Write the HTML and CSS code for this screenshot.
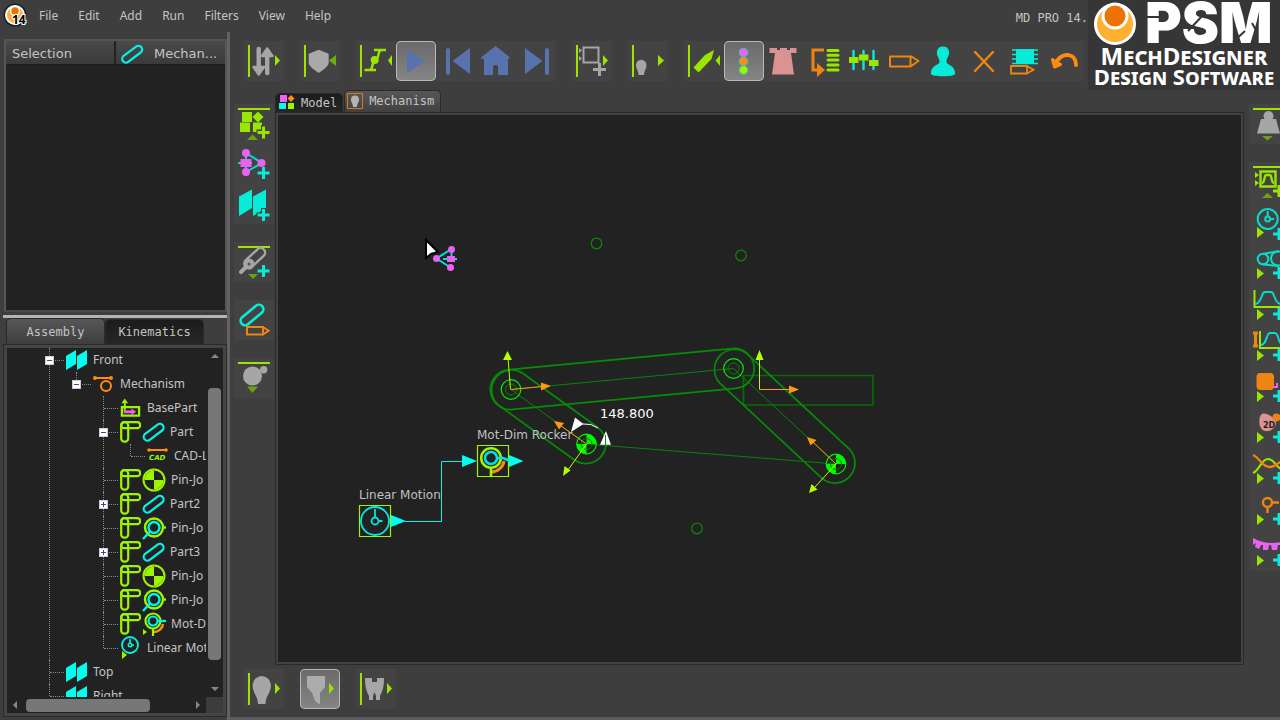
FILE: index.html
```html
<!DOCTYPE html>
<html lang="en">
<head>
<meta charset="utf-8">
<title>MechDesigner</title>
<link rel="stylesheet" href="styles.css">
</head>
<body>
<svg class="sprite" aria-hidden="true">
  <symbol id="planes" viewBox="0 0 21 20"><path d="M0 6 10 0v14L0 20zM11 6 21 0v14l-10 6z" fill="#00ffee"/></symbol>
  <symbol id="mech" viewBox="0 0 21 20"><path d="M2 4h16" stroke="#ff8c10" stroke-width="2"/><circle cx="2" cy="4" r="2" fill="#ff8c10"/><circle cx="18" cy="4" r="2" fill="#ff8c10"/><circle cx="13" cy="12" r="5" fill="none" stroke="#ff8c10" stroke-width="2"/></symbol>
  <symbol id="base" viewBox="0 0 22 20"><path d="M2 18V9h18v9z" fill="none" stroke="#9df500" stroke-width="2.400"/><path d="M5 14V5" stroke="#9df500" stroke-width="2"/><path d="M1.500 5 5 0l3.500 5z" fill="#9df500"/><path d="M4 14h9" stroke="#ee60f4" stroke-width="3"/><path d="m12 10.500 5 3.500-5 3.500z" fill="#ee60f4"/></symbol>
  <symbol id="frame" viewBox="0 0 21 22"><g fill="none" stroke="#9df500" stroke-width="2.200"><rect x="1.200" y="1.200" width="7" height="19.500" rx="3.300"/><rect x="1.200" y="1.200" width="19" height="6" rx="3"/></g></symbol>
  <symbol id="link" viewBox="0 0 23 20"><rect x="0" y="6.500" width="23" height="7.500" rx="3.700" fill="none" stroke="#00f5e4" stroke-width="2.200" transform="rotate(-37 11.500 10)"/></symbol>
  <symbol id="cad" viewBox="0 0 21 20"><path d="M2 4h17" stroke="#ff8c10" stroke-width="2"/><circle cx="2" cy="4" r="1.800" fill="#ff8c10"/><circle cx="19" cy="4" r="1.800" fill="#ff8c10"/><text x="2" y="14" class="cad-text">CAD</text></symbol>
  <symbol id="pin" viewBox="0 0 24 24"><circle cx="12" cy="12" r="10.500" fill="#222" stroke="#9df500" stroke-width="2"/><path d="M12 12V2.500A9.500 9.500 0 0 0 2.500 12zM12 12v9.500a9.500 9.500 0 0 0 9.500-9.500z" fill="#9df500"/></symbol>
  <symbol id="slide" viewBox="0 0 24 24"><circle cx="12" cy="11.500" r="9" fill="none" stroke="#9df500" stroke-width="2.400"/><path d="M21 11.500h3" stroke="#9df500" stroke-width="2.400"/><circle cx="12" cy="11.500" r="5.500" fill="none" stroke="#00f5e4" stroke-width="2.400"/><path d="m8 15.500-7 7.500" stroke="#00f5e4" stroke-width="2.400"/></symbol>
  <symbol id="motdim" viewBox="0 0 24 24"><path d="M21 12a9 9 0 0 1-9 8" fill="none" stroke="#ff8c10" stroke-width="2.400"/><circle cx="11" cy="9" r="7.500" fill="none" stroke="#9df500" stroke-width="2.200"/><path d="M11 16v8" stroke="#9df500" stroke-width="2.200"/><circle cx="11" cy="9" r="4.500" fill="none" stroke="#00f5e4" stroke-width="2.200"/><path d="M15 9h9" stroke="#00f5e4" stroke-width="2.400"/><path d="m1 17 4 3-4 3z" fill="#9df500"/></symbol>
  <symbol id="clock" viewBox="0 0 21 24"><circle cx="10" cy="9" r="8" fill="none" stroke="#00f5e4" stroke-width="1.800"/><path d="M10 9V3M10 9h4" stroke="#00f5e4" stroke-width="1.600"/><circle cx="10" cy="9" r="1.800" fill="#222" stroke="#00f5e4" stroke-width="1.400"/><path d="m2 15 5 4-5 4z" fill="#9df500"/></symbol>
</svg>

<div class="app">
  <header class="menubar">
    <svg class="app-icon" width="26" height="26" viewBox="0 0 26 26" aria-hidden="true"><circle cx="12" cy="12" r="10.500" fill="#ffb030" stroke="#1c1c38" stroke-width="2"/><circle cx="12" cy="12" r="9" fill="none" stroke="#fff" stroke-width="2"/><circle cx="12" cy="8" r="4.500" fill="#ee7203" stroke="#fff" stroke-width="1.500"/><text x="9" y="21" class="version">14</text></svg>
    <nav class="menus" aria-label="Main menu">
      <button>File</button><button>Edit</button><button>Add</button><button>Run</button><button>Filters</button><button>View</button><button>Help</button>
    </nav>
    <span class="window-title">MD PRO 14.</span>
  </header>

  <div class="body">
    <aside class="dock">
      <section class="selection" aria-label="Selection">
        <div class="selection-head">
          <div class="cell cell-name">Selection</div>
          <div class="cell cell-value"><svg width="24" height="20"><use href="#link"/></svg><span>Mechan...</span></div>
        </div>
      </section>
      <div class="splitter"></div>
      <div class="dock-tabs" role="tablist">
        <button class="dock-tab active" role="tab" aria-selected="true">Assembly</button>
        <button class="dock-tab" role="tab" aria-selected="false">Kinematics</button>
      </div>
      <section class="tree-panel">
        <div class="tree-view">
          <ul class="tree">
            <li><div class="row"><button class="toggle minus" aria-label="Collapse Front"></button><svg width="21" height="20"><use href="#planes"/></svg><span>Front</span></div>
              <ul>
                <li><div class="row"><button class="toggle minus" aria-label="Collapse Mechanism"></button><svg width="21" height="20"><use href="#mech"/></svg><span>Mechanism</span></div>
                  <ul>
                    <li><div class="row"><i class="leaf"></i><svg width="21" height="20"><use href="#base"/></svg><span>BasePart</span></div></li>
                    <li><div class="row"><button class="toggle minus" aria-label="Collapse Part"></button><svg width="21" height="22"><use href="#frame"/></svg><svg class="second" width="23" height="20"><use href="#link"/></svg><span>Part</span></div>
                      <ul><li><div class="row"><i class="leaf"></i><svg width="21" height="20"><use href="#cad"/></svg><span>CAD-L</span></div></li></ul>
                    </li>
                    <li><div class="row"><i class="leaf"></i><svg width="21" height="22"><use href="#frame"/></svg><svg class="second" width="24" height="24"><use href="#pin"/></svg><span>Pin-Jo</span></div></li>
                    <li><div class="row"><button class="toggle more" aria-label="Expand Part2"></button><svg width="21" height="22"><use href="#frame"/></svg><svg class="second" width="23" height="20"><use href="#link"/></svg><span>Part2</span></div></li>
                    <li><div class="row"><i class="leaf"></i><svg width="21" height="22"><use href="#frame"/></svg><svg class="second" width="24" height="24"><use href="#slide"/></svg><span>Pin-Jo</span></div></li>
                    <li><div class="row"><button class="toggle more" aria-label="Expand Part3"></button><svg width="21" height="22"><use href="#frame"/></svg><svg class="second" width="23" height="20"><use href="#link"/></svg><span>Part3</span></div></li>
                    <li><div class="row"><i class="leaf"></i><svg width="21" height="22"><use href="#frame"/></svg><svg class="second" width="24" height="24"><use href="#pin"/></svg><span>Pin-Jo</span></div></li>
                    <li><div class="row"><i class="leaf"></i><svg width="21" height="22"><use href="#frame"/></svg><svg class="second" width="24" height="24"><use href="#slide"/></svg><span>Pin-Jo</span></div></li>
                    <li><div class="row"><i class="leaf"></i><svg width="21" height="22"><use href="#frame"/></svg><svg class="second" width="24" height="24"><use href="#motdim"/></svg><span>Mot-D</span></div></li>
                    <li><div class="row"><i class="leaf"></i><svg width="21" height="24"><use href="#clock"/></svg><span>Linear Mot</span></div></li>
                  </ul>
                </li>
              </ul>
            </li>
            <li><div class="row"><i class="leaf"></i><svg width="21" height="20"><use href="#planes"/></svg><span>Top</span></div></li>
            <li><div class="row"><i class="leaf"></i><svg width="21" height="20"><use href="#planes"/></svg><span>Right</span></div></li>
          </ul>
        </div>
        <div class="vbar"><i class="arrow up"></i><i class="thumb"></i><i class="arrow down"></i></div>
        <div class="hbar"><i class="arrow left"></i><i class="thumb"></i><i class="arrow right"></i></div>
        <div class="corner"></div>
      </section>
    </aside>

    <main class="workspace">
      <div class="toolbar top" role="toolbar" aria-label="Main tools">
        <div class="group">
          <button aria-label="Sort"><svg viewBox="0 0 40 40"><path d="M4 4h2v32H4z" fill="#9ae600"/><g fill="#a6a6a6" stroke="#a6a6a6" stroke-linejoin="round" stroke-linecap="round"><path d="M14.700 8v17M23.200 32V16" stroke-width="4.400"/><path d="M9.500 26H20l-5.300 7.500zM18 15h10.500L23.200 7.500z" stroke-width="2.400"/></g><path d="m31 14 5 5.500-5 5.500z" fill="#9ae600"/></svg></button>
        </div>
        <div class="group">
          <button aria-label="Shield"><svg viewBox="0 0 40 40"><path d="M4 4h2v32H4z" fill="#9ae600"/><path d="m18.700 8.700 10 4V22c0 3-7 8-10 10-3-2-10-7-10-10v-9.300z" fill="#a9a9a9"/><path d="M36 14v11l-7-5.500z" fill="#6fae10"/></svg></button>
        </div>
        <div class="group">
          <button aria-label="Cycle"><svg viewBox="0 0 40 40"><path d="M4 4h2v32H4z" fill="#9ae600"/><path d="M18 9h12M8.500 29H20M25 9c-4 2-1 7-5 10-6 4-2 8-6 10" fill="none" stroke="#9ae600" stroke-width="2.400"/><circle cx="18.700" cy="19" r="4" fill="#9ae600"/><path d="M36 14v11l-4-5.500z" fill="#9ae600"/></svg></button>
          <button class="pressed" aria-label="Play" aria-pressed="true"><svg viewBox="0 0 40 40"><path d="m11 8 18 12-18 12.500z" fill="#5872ae"/></svg></button>
          <button aria-label="To start"><svg viewBox="0 0 40 40" fill="#5872ae"><rect x="10" y="7" width="4" height="27" rx="2"/><path d="M34 7v26L16.500 20z"/></svg></button>
          <button aria-label="Home"><svg viewBox="0 0 40 40" fill="#5872ae"><path d="M19.500 5 33.500 16v2H32v16H22v-9q-2.500-2-5 0v9H8V18H5.500v-2z"/></svg></button>
          <button aria-label="To end"><svg viewBox="0 0 40 40" fill="#5872ae"><path d="m9 7 17.500 13L9 33z"/><rect x="29" y="7" width="4" height="27" rx="2"/></svg></button>
        </div>
        <div class="group">
          <button aria-label="Add element"><svg viewBox="0 0 40 40"><path d="M4 4h2v32H4z" fill="#9ae600"/><path d="M11.500 6.500h15v15h-15z" fill="none" stroke="#a6a6a6" stroke-width="2"/><path d="m7 7 3 2.500L7 12zM7 15l3 2.500L7 20z" fill="#a6a6a6"/><path d="M27.500 22v13M21 28.500h13" stroke="#a6a6a6" stroke-width="3"/><path d="m31 14 5 5.500-5 5.500z" fill="#9ae600"/></svg></button>
        </div>
        <div class="group">
          <button aria-label="Show"><svg viewBox="0 0 40 40"><path d="M4 4h2v32H4z" fill="#9ae600"/><path d="M10.500 34c0-4-2.500-6-2.500-10a5 5 0 0 1 10.500 0c0 4-2.500 6-2.500 10z" fill="#a6a6a6"/><path d="m30 14 6 5.500-6 5.500z" fill="#9ae600"/></svg></button>
        </div>
        <div class="group">
          <button aria-label="Pen"><svg viewBox="0 0 40 40"><path d="M4 4h2v32H4z" fill="#9ae600"/><path d="m30 9-2.500 9L14.500 31.500l-5-5L21 14z" fill="#9ae600"/><path d="M36 14v11l-4.500-5.500z" fill="#9ae600"/></svg></button>
          <button class="pressed" aria-label="Status lights" aria-pressed="true"><svg viewBox="0 0 40 40" stroke="#38c8b0"><circle cx="19.500" cy="11.500" r="4.300" fill="#f060f4"/><circle cx="19.500" cy="20.300" r="4.300" fill="#ff8c10"/><circle cx="19.500" cy="29" r="4.300" fill="#9df500"/></svg></button>
          <button aria-label="Rebuild"><svg viewBox="0 0 40 40"><path d="M5.500 7H13v2h3V7h7v2h3V7h6.500v5H27l3 21.500H8L11 12H5.500z" fill="#db9292"/></svg></button>
          <button aria-label="Reorder"><svg viewBox="0 0 40 40"><path d="M20 9H9v20h5" fill="none" stroke="#ee8512" stroke-width="3"/><path d="m13 22 8 7-8 7z" fill="#ee8512"/><path d="M24 9.500h10M24 14.200h10M24 19h10M24 24h10M24 29h10" stroke="#9ae600" stroke-width="3" stroke-linecap="round"/></svg></button>
          <button aria-label="Settings"><svg viewBox="0 0 40 40"><path d="M9.500 10v18M19.500 10v18M29.500 10v18" stroke="#06ecd8" stroke-width="2.400" stroke-linecap="round"/><path d="M5 16h9.500v6H5zM15 13.500h9.500v6H15zM25 19h9.500v6H25z" fill="#9ae600"/></svg></button>
          <button aria-label="Edit"><svg viewBox="0 0 40 40" fill="none" stroke="#ee8512" stroke-width="2" stroke-linejoin="round"><path d="M6 15.500h20.500v10H6zM26.500 15l8 5-8 5.500"/></svg></button>
          <button aria-label="User"><svg viewBox="0 0 40 40"><path d="M19 5.500c4.500 0 6.500 3.500 6 7.500-.4 3-2.500 4-2.500 8 0 3 9 3 8.500 12-.2 3-24 3-24 0-.5-9 8.500-9 8.500-12 0-4-2.100-5-2.500-8-.5-4 1.500-7.500 6-7.500z" fill="#06ecd8"/></svg></button>
          <button aria-label="Delete"><svg viewBox="0 0 40 40"><path d="m11 11 18 19M29 11 11 30" stroke="#ee8512" stroke-width="2.400" stroke-linecap="round"/></svg></button>
          <button aria-label="Edit memory"><svg viewBox="0 0 40 40"><path d="M12 8h18v15H12z" fill="#06ecd8"/><path d="M8 9h26M8 13.500h26M8 18h26M8 22.500h26" stroke="#06ecd8" stroke-width="1.600"/><path d="M7 25h16v7.500H7zM23 25l6.500 3.700-6.500 3.800" fill="none" stroke="#ee8512" stroke-width="1.800"/></svg></button>
          <button aria-label="Undo"><svg viewBox="0 0 40 40"><path d="M13 20c6-9 19-8 19 4" fill="none" stroke="#ff8a10" stroke-width="4" stroke-linecap="round"/><path d="m8.500 18.500 8 5-6 2.500z" fill="#ff8a10" stroke="#ff8a10" stroke-width="3" stroke-linejoin="round"/></svg></button>
        </div>
      </div>

      <div class="stage">
        <div class="toolbar side left" role="toolbar" aria-label="Model tools">
          <div class="group">
            <button aria-label="Add blocks"><svg viewBox="0 0 40 40" fill="#9ae600"><path d="M4 4h32v2H4zM8 8h10v10H8zM24 7.500l5.500 5.500-5.500 5.500-5.500-5.500zM6 18.500h10V28H6zM19 18.500h9V28h-9z"/><path d="M29.500 21v14M22.500 28h14" stroke="#434343" stroke-width="5"/><path d="M29.500 22.500v12M23.500 28.500h12" stroke="#9ae600" stroke-width="3"/><path d="m18.500 30.500 5.500 5.500H13z" fill="#6fa012"/></svg></button>
            <button aria-label="Add mechanism"><svg viewBox="0 0 40 40"><path d="m12 9 16 10-16 9M4 19h14M12 9v19" fill="none" stroke="#06d8d0" stroke-width="2"/><g fill="#ea62f0"><circle cx="12" cy="9" r="4"/><circle cx="27.500" cy="19" r="4"/><circle cx="12" cy="28" r="4"/><path d="M6.500 15h11v8h-11z"/></g><path d="M29.500 23v12M23.500 29h12" stroke="#06ecd8" stroke-width="3"/></svg></button>
            <button aria-label="Add plane"><svg viewBox="0 0 40 40"><path d="m5 12.500 13-7V24L5 32zM19 12.500l13-7V24l-13 8z" fill="#06ecd8"/><path d="M29.500 24v14M22.500 31h14" stroke="#434343" stroke-width="5"/><path d="M29.500 25v12M23.500 31h12" stroke="#06ecd8" stroke-width="3"/></svg></button>
          </div>
          <div class="group">
            <button aria-label="Add link"><svg viewBox="0 0 40 40"><path d="M4 4h32v2H4z" fill="#9ae600"/><g fill="none" stroke="#a6a6a6"><rect x="8" y="12" width="25" height="9" rx="4.500" stroke-width="2.400" transform="rotate(-43 20 16)"/><path d="m7 30 6-6" stroke-width="4" stroke-linecap="round"/></g><circle cx="15" cy="22" r="5.500" fill="#a6a6a6"/><circle cx="15" cy="22" r="1.500" fill="#555"/><path d="M29.500 23v12M23.500 29h12" stroke="#06ecd8" stroke-width="3"/><path d="M14 32h10l-5 5z" fill="#6fa012"/></svg></button>
          </div>
          <div class="group">
            <button aria-label="Edit part"><svg viewBox="0 0 40 40" fill="none"><rect x="4.500" y="10.500" width="27" height="9" rx="4.500" stroke="#06ecd8" stroke-width="2.600" transform="rotate(-40 18 15)"/><path d="M13 27h16v7.500H13zM29 27l5.500 3.700-5.500 3.800" stroke="#ee8512" stroke-width="2"/></svg></button>
          </div>
          <div class="group">
            <button aria-label="Mass"><svg viewBox="0 0 40 40"><path d="M4 4h32v2H4z" fill="#9ae600"/><circle cx="18.500" cy="18" r="9.500" fill="#a6a6a6"/><circle cx="29.700" cy="11.700" r="3.700" fill="#a6a6a6"/><path d="M13 28.500h11L18.500 35z" fill="#6fa012"/></svg></button>
          </div>
        </div>

        <section class="center">
          <div class="view-tabs" role="tablist">
            <button class="view-tab" role="tab" aria-selected="false"><svg width="16" height="16" viewBox="0 0 16 16"><path d="M1 0h7v7H1z" fill="#f060f4"/><path d="m12 0 3.500 3.500L12 7 8.500 3.500z" fill="#ff8c10"/><path d="M0 8h7v6H0z" fill="#00ffee"/><path d="M9 8h6v6H9z" fill="#9df500"/></svg>Model</button>
            <button class="view-tab active" role="tab" aria-selected="true"><svg width="16" height="16" viewBox="0 0 16 16"><path d="M.500.500h15v15H.500z" fill="none" stroke="#d87a14"/><path d="M6 14c0-4-2-4-2-7.500a4 4 0 0 1 8 0C12 10 10 10 10 14z" fill="#b4b4b4"/></svg>Mechanism</button>
          </div>
          <div class="canvas-frame">
            <svg class="canvas" role="img" aria-label="Four-bar mechanism">
              <g transform="translate(-278 -115)" fill="none">
                <g stroke="#088a08" stroke-width="1.200"><circle cx="596.500" cy="243.500" r="5.300"/><circle cx="741" cy="255.500" r="5.300"/><circle cx="697" cy="528.500" r="5.300"/></g>
                <path d="M743.500 375.500h129.500v29.500H743.500z" stroke="#046c04" stroke-width="1.700"/>
                <g stroke="#068c06" stroke-width="1.700">
                  <path d="M509.100 369.600 731.600 348.600A20 20 0 1 1 735.400 388.400L512.900 409.400A20 20 0 1 1 509.100 369.600z"/>
                  <path d="M522.700 373.300 598.200 427.800A20 20 0 0 1 574.800 460.200L499.300 405.700A20 20 0 0 1 522.700 373.300z"/>
                  <path d="M747.100 353.900 849.600 449.400A20 20 0 0 1 822.400 478.600L719.900 383.100A20 20 0 0 1 747.100 353.900z"/>
                </g>
                <g stroke="#088208"><path d="M511 389.500 733.500 368.500 836 464 586.500 444z"/><circle cx="511" cy="389.500" r="5.500"/><circle cx="733.500" cy="368.500" r="5.500"/></g>
                <g stroke="#00f000" stroke-width="1.200"><circle cx="511" cy="389.500" r="9.800"/><circle cx="733.500" cy="368.500" r="9.800"/><circle cx="586.500" cy="444" r="9.800"/><circle cx="836" cy="464" r="9.800"/></g>
                <g fill="#00fa00"><path d="M586.500 444v-9.800a9.800 9.800 0 0 1 9.800 9.800zM586.500 444v9.800a9.800 9.800 0 0 1-9.800-9.800zM836 464v-9.800a9.800 9.800 0 0 1 9.800 9.800zM836 464v9.800a9.800 9.800 0 0 1-9.800-9.800z"/></g>
                <g stroke="#087808"><circle cx="586.500" cy="444" r="5.500"/><circle cx="836" cy="464" r="5.500"/></g>
                <g stroke="#b4ff00" fill="#b4ff00"><path d="M510.500 389.500 508 358M759.500 389.500V358M586.500 444 568 470M836 464 815 487"/><path stroke="none" d="m507.500 351 4.500 9h-9zM759.500 350l4 10h-8zM563 476l1.500-10 6 4.500zM809 493l2.500-9 6 5.500z"/></g>
                <g stroke="#ff9a10" fill="#ff9a10"><path d="m511 389.500 31-3M759.500 389.500H790M586.500 444 561 426M836 464 813 442"/><path stroke="none" d="m551 386-10 4.500v-8zM799 389.500l-10 4v-8zM554 421l10 2-5 6.500zM807 437l9.500 3-6 5.500z"/></g>
                <path d="m575 417.500 8.500 6.500-12.500 8zM600 444.700h11L606 431z" fill="#fff"/><path d="M583 424q8-1 15 4" stroke="#fff"/><path d="M605.500 435v10" stroke="#088c08"/>
                <g stroke="#9df500"><path d="M477.500 445.500h31v31h-31zM359.500 505.500h31v31h-31z" stroke-width="1.200"/></g>
                <path d="M504 461a13 13 0 0 1-13 11" stroke="#ff8c10" stroke-width="3"/>
                <circle cx="491" cy="458" r="9.800" stroke="#9df500" stroke-width="2.600"/><path d="M491 468v9" stroke="#9df500" stroke-width="2.600"/>
                <circle cx="491" cy="458" r="6" stroke="#00e0f0" stroke-width="2.600"/><path d="M497 458h6l7 3" stroke="#00e0f0" stroke-width="2.600"/>
                <circle cx="375" cy="521" r="14" stroke="#00e8e0" stroke-width="1.800"/><circle cx="375" cy="521" r="3.500" stroke="#00e8e0" stroke-width="1.800"/><path d="M375 517.500V509M378.500 521h4" stroke="#00e8e0" stroke-width="1.800"/>
                <path d="M405 521.500h36.500v-60H463" stroke="#00f5f0"/><path d="m391 515 15 6-15 6zM462 455l15 6-15 6zM509 455l14.500 6-14.500 6z" fill="#00fff0"/>
                <text x="477" y="439" class="label">Mot-Dim Rocker</text>
                <text x="359" y="499" class="label">Linear Motion</text>
                <text x="600" y="418" class="dimension">148.800</text>
                <path d="m436.500 258.500 15-9.500v7M436.500 258.500l14 9M443 259h14" stroke="#00e0dc" stroke-width="2"/>
                <g fill="#ea62f0"><circle cx="451.500" cy="249.500" r="3.500"/><circle cx="436.500" cy="258.500" r="3.500"/><circle cx="450.500" cy="267.500" r="3.500"/><path d="M447 256h8v6h-8z"/></g>
                <path d="M426 240v18l5-4 7-2z" fill="#fff" stroke="#000" stroke-width="2"/>
              </g>
            </svg>
          </div>
        </section>

        <div class="toolbar side right" role="toolbar" aria-label="Function tools">
          <div class="group">
            <button aria-label="Weight"><svg viewBox="0 0 40 40"><path d="M4 4h36v2H4z" fill="#9ae600"/><circle cx="19.500" cy="12" r="5" fill="#a6a6a6"/><path d="M12 15h15l4 14.500H8z" fill="#a6a6a6"/><path d="M13 32h11l-5.500 4.500z" fill="#6fa012"/></svg></button>
          </div>
          <div class="group tall">
            <button aria-label="Add function"><svg viewBox="0 0 40 40"><path d="M4 4h36v2H4z" fill="#9ae600"/><path d="M11.500 9.500h15v15h-15zM13 21c3 0 2-8 4-8h4c2 0 1 8 4 8" fill="none" stroke="#9ae600" stroke-width="2.400"/><path d="m6 10 4 3-4 3zM6 18l4 3-4 3z" fill="#9ae600"/><path d="M30 23v12M24 29h12" stroke="#9ae600" stroke-width="3"/><path d="m18.500 31 5.500 5H13z" fill="#6fa012"/></svg></button>
            <button aria-label="Add motion"><svg viewBox="0 0 40 40"><g fill="none" stroke="#06dccc" stroke-width="2"><circle cx="18.700" cy="16" r="10"/><circle cx="18.700" cy="16" r="2.500"/><path d="M18.700 14V8M21 16h4"/></g><path d="m8 24 7 5.500L8 35z" fill="#9ae600"/><path d="M30 25v12M24 31h12" stroke="#06ecd8" stroke-width="3"/></svg></button>
            <button aria-label="Add belt"><svg viewBox="0 0 40 40"><g fill="none" stroke="#06dccc" stroke-width="2"><path d="m14 20.500 16 1.500M14 10l16-3"/><circle cx="14" cy="15" r="5.300"/><circle cx="29" cy="14.500" r="7"/></g><path d="m8 24 7 5.500L8 35z" fill="#9ae600"/><path d="M30 23v12M24 29h12" stroke="#06ecd8" stroke-width="3"/></svg></button>
            <button aria-label="Add motion graph"><svg viewBox="0 0 40 40" fill="none"><path d="M5.500 5v17H40" stroke="#9ae600" stroke-width="2"/><path d="M6 19c7 0 6-12 10-12h6c4 0 3 12 10 12" stroke="#06dccc" stroke-width="2"/><path d="m8 24 7 5.500L8 35z" fill="#9ae600"/><path d="M30 23v12M24 29h12" stroke="#06ecd8" stroke-width="3"/></svg></button>
            <button aria-label="Add scaled graph"><svg viewBox="0 0 40 40" fill="none"><path d="M11 5v17h29" stroke="#9ae600" stroke-width="2"/><path d="M12 19c6 0 5-12 9-12h5c4 0 3 12 8 12" stroke="#06dccc" stroke-width="2"/><path d="M4 7h5M6.500 7v13M4 20h5" stroke="#ee8512" stroke-width="3"/><path d="m8 24 7 5.500L8 35z" fill="#9ae600"/><path d="M30 23v12M24 29h12" stroke="#06ecd8" stroke-width="3"/></svg></button>
            <button aria-label="Add block"><svg viewBox="0 0 40 40"><rect x="7.500" y="6" width="17.500" height="17" rx="4" fill="#ee8512"/><path d="M24 20h4v-4" fill="none" stroke="#ea62f0" stroke-width="2"/><path d="m8 24 7 5.500L8 35z" fill="#9ae600"/><path d="M30 23v12M24 29h12" stroke="#06ecd8" stroke-width="3"/></svg></button>
            <button aria-label="Add 2D cam"><svg viewBox="0 0 40 40"><path d="M13 6c4-2 14 4 14 9s-6 9-11 8c-7-1-7-15-3-17z" fill="#db9292"/><circle cx="27.500" cy="9.500" r="4" fill="#ee8512"/><text x="14" y="20" class="cam-text">2D</text><path d="m8 24 7 5.500L8 35z" fill="#9ae600"/><path d="M30 23v12M24 29h12" stroke="#06ecd8" stroke-width="3"/></svg></button>
            <button aria-label="Add curves"><svg viewBox="0 0 40 40" fill="none"><path d="M4 24c7-3 8-14 15-14s8 10 16 11" stroke="#9ae600" stroke-width="2"/><path d="M4 6c7 3 9 12 17 12 6 0 8-5 14-7" stroke="#ee8512" stroke-width="2.400"/><path d="m8 24 7 5.500L8 35z" fill="#9ae600"/><path d="M30 23v12M24 29h12" stroke="#06ecd8" stroke-width="3"/></svg></button>
            <button aria-label="Add point"><svg viewBox="0 0 40 40"><g fill="none" stroke="#ee8512" stroke-width="2.400"><circle cx="18.500" cy="12.500" r="4.500"/><path d="M23 12.500h7M18.500 17v6"/></g><path d="m8 24 7 5.500L8 35z" fill="#9ae600"/><path d="M30 23v12M24 29h12" stroke="#06ecd8" stroke-width="3"/></svg></button>
            <button aria-label="Add rack"><svg viewBox="0 0 40 40"><path d="M4 7c10 6 22 6 32 3v6l-4 1-1-3h-2l-1 5h-5l-1-5h-2l-1 5h-5l0-5h-2l-2 4-4-2 1-4-3 2z" fill="#ea62f0"/><path d="m8 24 7 5.500L8 35z" fill="#9ae600"/><path d="M30 23v12M24 29h12" stroke="#06ecd8" stroke-width="3"/></svg></button>
          </div>
        </div>
      </div>

      <div class="toolbar bottom" role="toolbar" aria-label="Filters">
        <div class="group"><button aria-label="Visibility"><svg viewBox="0 0 40 40"><path d="M4 4h2v32H4z" fill="#9ae600"/><path d="M14 35c0-8-5.500-11-5.500-19a9.300 10 0 0 1 18.500 0c0 8-5.500 11-5.500 19z" fill="#a6a6a6"/><path d="m31 14 5 5.500-5 5.500z" fill="#9ae600"/></svg></button></div>
        <div class="group"><button class="pressed" aria-label="Filter" aria-pressed="true"><svg viewBox="0 0 40 40"><path d="M7 7h18v11l-5 6v11q-5-1-6-6l-2-5-5-6z" fill="#acacac"/><path d="m29 14 5 5.500-5 5.500z" fill="#9ae600"/></svg></button></div>
        <div class="group"><button aria-label="Clothing filter"><svg viewBox="0 0 40 40"><path d="M4 4h2v32H4z" fill="#9ae600"/><path d="M9 9h7v4h5V9h7c0 10-2 14-4 18v4h-4v-4l-1.500-4-1.500 4v4h-4v-4C11 23 9 19 9 9z" fill="#a6a6a6"/><path d="m31 14 5 5.500-5 5.500z" fill="#9ae600"/></svg></button></div>
      </div>
    </main>
  </div>

  <div class="brand">
    <div class="brand-top">
      <svg width="44" height="44" viewBox="0 0 44 44" aria-hidden="true"><circle cx="22" cy="22" r="19.500" fill="#ffb030" stroke="#fff" stroke-width="3"/><circle cx="22" cy="14" r="12" fill="#ee7203" stroke="#fff" stroke-width="3"/></svg>
      <svg class="psm" width="134" height="44" viewBox="0 0 134 44"><text x="0" y="41" class="psm-text">PSM</text><path d="M0 15h14M43 29l16-17M88 40l12-11M112 30l-5-9" fill="none" stroke="#363636" stroke-width="2"/></svg>
    </div>
    <div class="brand-line product">MechDesigner</div>
    <div class="brand-line">Design Software</div>
  </div>
</div>
</body>
</html>
```
FILE: styles.css
```css
* { box-sizing: border-box; }
body { margin: 0; background: #3e3e3e; color: #c4c4c4; font: 12px/16px "Noto Sans", sans-serif; }
button { margin: 0; padding: 0; border: 0; background: none; color: inherit; font: inherit; }
svg { display: block; flex: none; }
.sprite { position: absolute; width: 0; height: 0; }
.app { position: relative; display: flex; flex-direction: column; height: 100vh; overflow: hidden; }

.menubar { display: flex; align-items: center; height: 32px; flex: none; padding: 0 192px 0 3px; }
.app-icon { overflow: visible; }
.menus { display: flex; gap: 20px; padding-left: 10px; }
.version { font: bold 12px "Noto Sans", sans-serif; fill: #000; stroke: #fff; stroke-width: 2px; paint-order: stroke; }
.window-title { margin-left: auto; padding-top: 4px; font: 12px/16px "DejaVu Sans Mono", monospace; }

.body { display: flex; flex: 1; min-height: 0; }
.dock { display: flex; flex-direction: column; width: 230px; flex: none; padding: 7px 0 3px 3px; border-right: 3px solid #626262; }
.selection { height: 273px; flex: none; margin-left: 1px; border: 2px solid #555; border-bottom-color: #4a4a4a; background: #222; }
.selection-head { display: flex; height: 24px; border-bottom: 1px solid #1c1c1c; background: linear-gradient(#4a4a4a, #3a3a3a); font: 13px/22px "DejaVu Sans", sans-serif; }
.cell { display: flex; align-items: center; padding-top: 2px; }
.cell-name { width: 110px; padding-left: 6px; border-right: 2px solid #222; }
.cell-value { flex: 1; gap: 10px; padding-left: 4px; white-space: nowrap; }
.splitter { height: 3px; flex: none; margin-top: 3px; background: #b4b4b4; }

.dock-tabs { display: flex; align-items: flex-end; height: 26px; flex: none; padding-left: 3px; font: 12px/16px "DejaVu Sans Mono", monospace; }
.dock-tab { width: 99px; height: 25px; border: 1px solid #2a2a2a; border-bottom: 0; border-radius: 5px 5px 0 0; background: linear-gradient(#1c1c1c, #262626); font: inherit; }
.dock-tab.active { height: 26px; background: linear-gradient(#575757, #3e3e3e); }

.tree-panel { display: grid; grid-template: minmax(0, 1fr) 16px / minmax(0, 1fr) 17px; flex: 1; min-height: 0; padding: 3px; border: 1px solid #2a2a2a; background: #444; }
.tree-view { overflow: hidden; background: #222; }
.tree, .tree ul { margin: 0; padding: 0; list-style: none; }
.tree { padding-left: 38px; }
.tree ul { padding-left: 27px; }
.tree li { position: relative; }
.tree li::before { content: ""; position: absolute; left: 4px; top: 0; bottom: 0; border-left: 1px dotted #888; }
.tree li:last-child::before { bottom: auto; height: 12px; }
.row { position: relative; display: flex; align-items: center; height: 24px; white-space: nowrap; font-size: 12px; }
.row::before { content: ""; position: absolute; left: 5px; top: 12px; width: 14px; border-top: 1px dotted #888; }
.row svg { margin-left: 12px; }
.row svg.second { margin-left: 1px; }
.row span { margin-left: 6px; }
.row .second + span { margin-left: 5px; }
.leaf { width: 9px; flex: none; }
.toggle { position: relative; width: 9px; height: 9px; flex: none; border: 1px solid #ccc; background: linear-gradient(#304f90, #304f90) center / 5px 1px no-repeat #fff; }
.toggle.more { background: linear-gradient(#304f90, #304f90) center / 5px 1px no-repeat, linear-gradient(#304f90, #304f90) center / 1px 5px no-repeat #fff; }

.vbar, .hbar { display: flex; align-items: center; background: #222; }
.vbar { flex-direction: column; padding: 6px 0; }
.vbar .thumb { width: 13px; height: 272px; margin: 30px 0 auto; border-radius: 4px; background: #777; }
.hbar { padding: 0 6px; }
.hbar .thumb { width: 124px; height: 13px; margin: 0 auto 0 9px; border-radius: 4px; background: #777; }
.corner { background: #3c3c3c; }
.arrow { border: 4px solid transparent; }
.up { border-top: 0; border-bottom-color: #888; }
.down { border-bottom: 0; border-top-color: #888; }
.left.arrow { border-left: 0; border-right-color: #888; }
.right.arrow { border-right: 0; border-left-color: #888; }

.workspace { display: flex; flex-direction: column; flex: 1; min-width: 0; border-bottom: 3px solid #5c5c5c; }
.toolbar { display: flex; }
.toolbar button { width: 40px; height: 40px; flex: none; }
.toolbar button svg { width: 40px; height: 40px; }
.toolbar .group { display: flex; background: #434343; }
.toolbar .pressed { display: grid; place-items: center; border-radius: 5px; background: linear-gradient(#6a6a6a, #858585); box-shadow: inset 0 0 0 1px #b8b8b8; }
.top, .bottom { align-items: flex-start; gap: 16px; padding-left: 14px; }
.top { height: 58px; padding-top: 9px; flex: none; overflow: hidden; }
.bottom { height: 52px; padding-top: 4px; flex: none; }
.stage { display: flex; flex: 1; min-height: 0; }
.side { flex-direction: column; gap: 18px; padding-top: 14px; flex: none; }
.side .group { flex-direction: column; }
.side.left { width: 45px; padding-left: 4px; padding-right: 1px; }
.side.right { width: 36px; padding-left: 5px; overflow: hidden; }
.side.right .group { width: 40px; }
.side .tall { gap: 1px; }

.center { display: flex; flex-direction: column; flex: 1; min-width: 0; }
.view-tabs { display: flex; align-items: flex-end; gap: 1px; height: 23px; flex: none; font: 12px/16px "DejaVu Sans Mono", monospace; }
.view-tab { display: flex; align-items: center; gap: 6px; height: 20px; padding: 0 5px 2px 3px; border: 1px solid #292929; border-bottom: 0; border-radius: 5px 5px 0 0; background: linear-gradient(#1c1c1c, #272727); font: inherit; }
.view-tab.active { height: 23px; padding: 0 6px 2px 2px; background: linear-gradient(#575757, #404040); }
.canvas-frame { flex: 1; min-height: 0; margin-top: -1px; padding: 2px; border: 1px solid #292929; background: #424242; }
.canvas { width: 100%; height: 100%; background: #222; }
.label { font: 12px "DejaVu Sans", sans-serif; fill: #c0c0c0; }
.dimension { font: 13px "DejaVu Sans", sans-serif; fill: #fff; }
.cad-text { font: italic bold 7px "DejaVu Sans", sans-serif; fill: #9df500; }
.cam-text { font: bold 8px "DejaVu Sans", sans-serif; fill: #222; }

.brand { position: absolute; top: 0; right: 0; width: 192px; height: 90px; padding: 2px 5px 0; background: #363636; color: #fff; white-space: nowrap; }
.brand-top { display: flex; gap: 8px; }
.psm { overflow: visible; }
.psm-text { font: 900 56px Inter, sans-serif; fill: #fff; }
.brand-line { display: flex; justify-content: center; font: bold small-caps 22px/20px "Noto Sans", sans-serif; }
.product { font-size: 24px; }
```
